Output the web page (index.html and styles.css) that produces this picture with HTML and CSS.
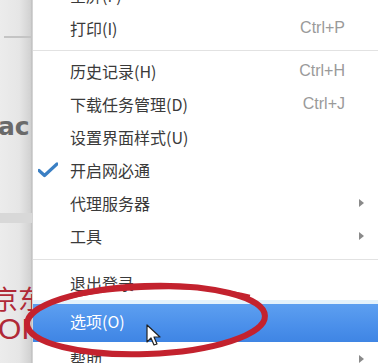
FILE: index.html
```html
<!DOCTYPE html>
<html>
<head>
<meta charset="utf-8">
<link rel="stylesheet" href="styles.css">
</head>
<body>
<div class="page">
  <div class="strip">
    <div class="strip-line"></div>
    <div class="strip-ac">ac</div>
    <div class="strip-band"></div>
    <div class="strip-red">京东<br><span class="strip-oi">OI</span></div>
  </div>
  <div class="menu">
    <div class="row"><span class="label">全屏(F)</span><span class="key">F11</span></div>
    <div class="row"><span class="label">打印(I)</span><span class="key">Ctrl+P</span></div>
    <div class="sep sep-a"></div>
    <div class="row"><span class="label">历史记录(H)</span><span class="key">Ctrl+H</span></div>
    <div class="row"><span class="label">下载任务管理(D)</span><span class="key">Ctrl+J</span></div>
    <div class="row"><span class="label">设置界面样式(U)</span></div>
    <div class="row">
      <svg class="check" width="20" height="16" viewBox="0 0 20 16"><path d="M1 8.5 L6.5 13.5 L19 2" fill="none" stroke="#3a7fc4" stroke-width="3.2" stroke-linecap="round" stroke-linejoin="round"/></svg>
      <span class="label">开启网必通</span>
    </div>
    <div class="row"><span class="label">代理服务器</span><span class="arrow"></span></div>
    <div class="row"><span class="label">工具</span><span class="arrow"></span></div>
    <div class="sep sep-b"></div>
    <div class="row row-exit"><span class="label">退出登录</span></div>
    <div class="row row-hi"><span class="label">选项(O)</span></div>
    <div class="row"><span class="label">帮助</span><span class="arrow"></span></div>
  </div>
  <div class="edge"></div>
</div>
<svg class="ring" width="387" height="363" viewBox="0 0 387 363">
  <ellipse cx="146" cy="320" rx="119" ry="34" transform="rotate(-2 146 320)" fill="none" stroke="#c3222e" stroke-width="6"/>
  <path d="M60 300 C 110 286, 200 284, 250 296" fill="none" stroke="#c3222e" stroke-width="2.5"/>
</svg>
<svg class="cursor" width="16" height="24" viewBox="0 0 16 24">
  <path d="M1 1 L1 18 L5 14 L8 21 L11 20 L8 13 L14 13 Z" fill="#fff" stroke="#222" stroke-width="1.2" stroke-linejoin="round"/>
</svg>
</body>
</html>
```

FILE: styles.css
```css
html, body {
  margin: 0;
  padding: 0;
}
body {
  width: 387px;
  height: 363px;
  overflow: hidden;
  position: relative;
  background: #fff;
  font-family: "Noto Sans CJK SC", "Liberation Sans", sans-serif;
}
.page {
  display: flex;
  height: 363px;
}
.strip {
  width: 32px;
  flex: none;
  position: relative;
  overflow: hidden;
  background: linear-gradient(to right, #ececec 0%, #e6e6e6 60%, #d2d2d2 95%, #bdbdbd 100%);
}
.strip-line {
  position: absolute;
  left: 4px;
  right: 0;
  top: 36px;
  height: 2px;
  background: #c4c4c4;
}
.strip-ac {
  position: absolute;
  left: -2px;
  top: 112px;
  font-family: "DejaVu Sans", sans-serif;
  font-weight: bold;
  font-size: 25px;
  color: #6a6a6a;
}
.strip-band {
  position: absolute;
  left: 0;
  right: 0;
  top: 213px;
  height: 10px;
  background: #d8d8d8;
}
.strip-red {
  position: absolute;
  left: -8px;
  top: 283px;
  font-size: 26px;
  line-height: 30px;
  color: #b02a38;
  white-space: nowrap;
}
.strip-oi {
  font-family: "Liberation Sans", sans-serif;
  font-size: 30px;
  margin-left: 6px;
}
.menu {
  width: 345px;
  flex: none;
  margin-top: -22px;
  background: #fff;
  border-left: 1px solid #d4d4d4;
  display: flex;
  flex-direction: column;
}
.edge {
  flex: 1;
  background: #fff;
}
.row {
  height: 33px;
  flex: none;
  display: flex;
  align-items: center;
  position: relative;
  padding-left: 37px;
  padding-right: 33px;
  font-size: 16px;
  color: #3a3a3a;
}
.label {
  flex: 1;
  white-space: nowrap;
}
.key {
  font-family: "Liberation Sans", sans-serif;
  color: #9a9a9a;
  font-size: 16px;
}
.check {
  position: absolute;
  left: 5px;
  top: 9px;
}
.arrow {
  position: absolute;
  right: 14px;
  top: 13px;
  width: 0;
  height: 0;
  border-top: 4px solid transparent;
  border-bottom: 4px solid transparent;
  border-left: 5px solid #8a8a8a;
}
.sep {
  flex: none;
  position: relative;
}
.sep-a {
  height: 10px;
}
.sep-b {
  height: 14px;
}
.sep::after {
  content: "";
  position: absolute;
  left: 0;
  right: 0;
  height: 1px;
  background: #e2e2e2;
}
.sep-a::after {
  top: 6px;
}
.sep-b::after {
  top: 7px;
}
.row-exit {
  height: 34px;
}
.row-hi {
  height: 34px;
  border-top: 4px solid #e4f2fb;
  background: linear-gradient(to bottom, #5d9ff0 0%, #4a8fea 60%, #3f85e4 100%);
  color: #fff;
  padding-bottom: 4px;
  box-sizing: content-box;
}
.ring {
  position: absolute;
  left: 0;
  top: 0;
  pointer-events: none;
}
.cursor {
  position: absolute;
  left: 146px;
  top: 324px;
}
```
